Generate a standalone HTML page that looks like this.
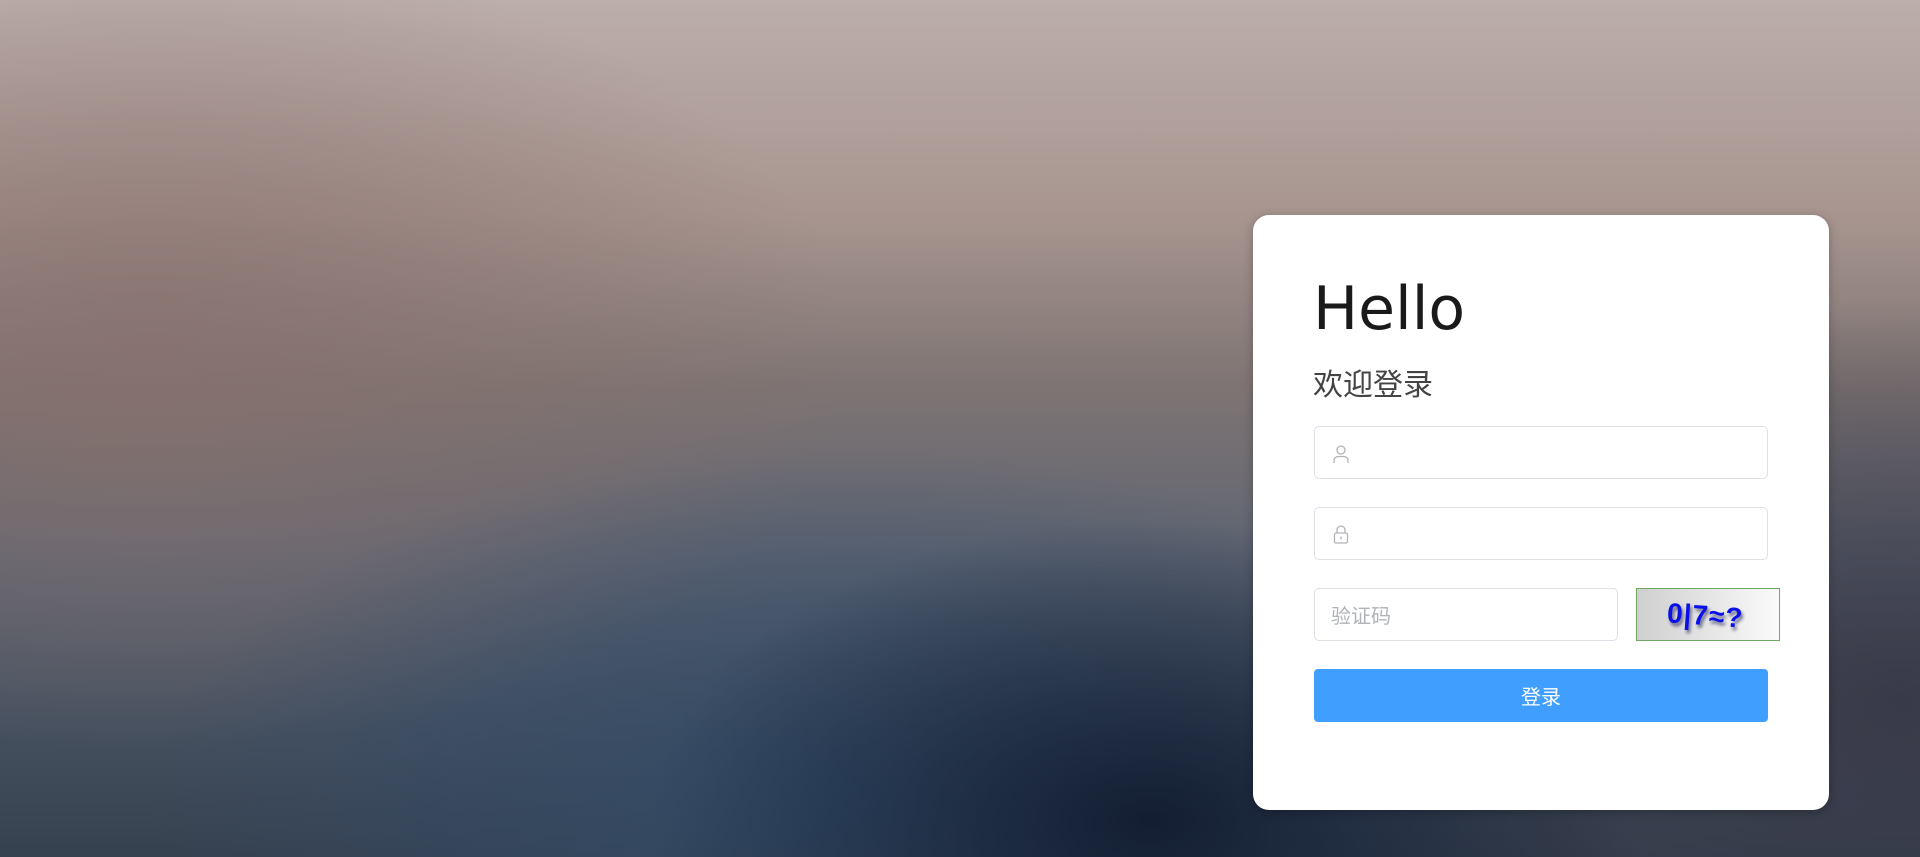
<!DOCTYPE html>
<html><head><meta charset="utf-8"><style>
html,body{margin:0;padding:0;width:1920px;height:857px;overflow:hidden}
body{position:relative;font-family:"Liberation Sans","Noto Sans CJK SC",sans-serif;
background:
radial-gradient(ellipse 500px 300px at 1150px 820px, rgba(15,25,45,0.9), rgba(15,25,45,0) 100%),
radial-gradient(ellipse 700px 350px at 850px 800px, rgba(50,75,105,0.9), rgba(50,75,105,0) 100%),
radial-gradient(ellipse 600px 400px at 1900px 700px, rgba(55,55,70,0.9), rgba(55,55,70,0) 100%),
radial-gradient(ellipse 700px 400px at 150px 350px, rgba(135,112,108,0.8), rgba(135,112,108,0) 100%),
linear-gradient(180deg,#bcaeab 0%,#a8958f 25%,#7e7473 45%,#5f6572 65%,#45505f 85%,#36414f 100%);}
.card{position:absolute;left:1253px;top:215px;width:576px;height:595px;background:#fff;border-radius:16px;box-shadow:0 2px 10px rgba(0,0,0,.25)}
.abs{position:absolute}
.h{left:1313px;top:274px;font-size:60px;color:#1a1a1a;line-height:70px;font-family:"DejaVu Sans","Liberation Sans",sans-serif}
.w{left:1313px;top:368px;font-size:30px;color:#444;line-height:36px}
.inp{border:1px solid #dcdfe6;border-radius:5px;box-sizing:border-box;background:#fff}
.btn{left:1314px;top:669px;width:454px;height:53px;background:#409eff;border-radius:4px;color:#fff;font-size:20px;text-align:center;line-height:58px}
</style></head><body>
<div class="card"></div>
<div class="abs h">Hello</div>
<div class="abs w">欢迎登录</div>
<div class="abs inp" style="left:1314px;top:426px;width:454px;height:53px">
<svg class="abs" style="left:17px;top:17px" width="18" height="20" viewBox="0 0 18 20" fill="none" stroke="#b0b3b9" stroke-width="1.3"><circle cx="9" cy="6" r="4"/><path d="M2 19v-2.5c0-2.5 2-4 4.5-4h5c2.5 0 4.5 1.5 4.5 4V19"/></svg>
</div>
<div class="abs inp" style="left:1314px;top:507px;width:454px;height:53px">
<svg class="abs" style="left:17px;top:16px" width="18" height="20" viewBox="0 0 18 20" fill="none" stroke="#b0b3b9" stroke-width="1.3"><path d="M5 9V6a4 4 0 0 1 8 0v3"/><rect x="2.5" y="9" width="13" height="10" rx="1.5"/><path d="M9 12.5v3"/></svg>
</div>
<div class="abs inp" style="left:1314px;top:588px;width:304px;height:53px">
<span class="abs" style="left:16px;top:15px;font-size:20px;color:#b0b3b9;line-height:26px">验证码</span>
</div>
<div class="abs" style="left:1636px;top:588px;width:144px;height:53px;box-sizing:border-box;border:1px solid #6fa862;background:linear-gradient(90deg,#cfcfcf,#f2f2f2 80%,#fafafa)">
<span class="abs" style="left:30px;top:10px;font-size:28px;font-weight:bold;color:#0a10e8;letter-spacing:1px;text-shadow:2px 3px 3px rgba(0,0,60,.55);line-height:34px;transform:rotate(4deg)">0|7≈?</span>
</div>
<div class="abs btn">登录</div>
</body></html>
